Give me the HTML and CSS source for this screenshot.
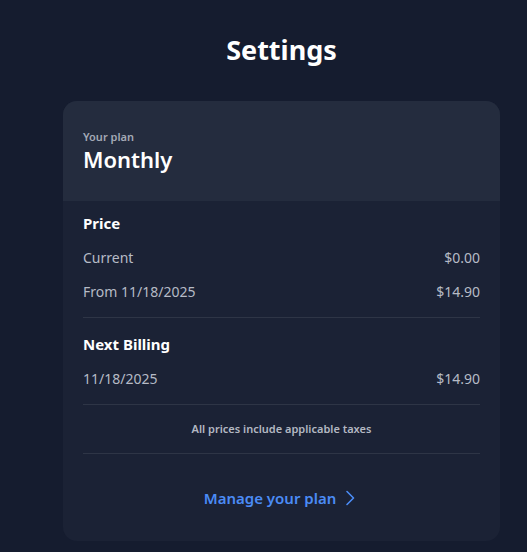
FILE: index.html
```html
<!DOCTYPE html>
<html>
<head>
<meta charset="utf-8">
<link rel="stylesheet" href="styles.css">
</head>
<body>
<div class="page">
  <h1 class="title">Settings</h1>
  <div class="card">
    <div class="card-head">
      <div class="plan-label">Your plan</div>
      <div class="plan-name">Monthly</div>
    </div>
    <div class="card-body">
      <div class="section first">
        <div class="section-title">Price</div>
        <div class="row"><span>Current</span><span>$0.00</span></div>
        <div class="row"><span>From 11/18/2025</span><span>$14.90</span></div>
      </div>
      <div class="section second">
        <div class="section-title">Next Billing</div>
        <div class="row"><span>11/18/2025</span><span>$14.90</span></div>
      </div>
      <div class="taxes">All prices include applicable taxes</div>
      <div class="manage">
        <a class="manage-link" href="#">Manage your plan
          <svg class="chev" width="10" height="16" viewBox="0 0 10 16"><path d="M2 1.5 L8.5 8 L2 14.5" fill="none" stroke="currentColor" stroke-width="1.6" stroke-linecap="round" stroke-linejoin="round"/></svg>
        </a>
      </div>
    </div>
  </div>
</div>
</body>
</html>
```
FILE: styles.css
```css
html, body {
  margin: 0;
  padding: 0;
  background: #151c2f;
  font-family: "Noto Sans", "Open Sans", sans-serif;
}
.page {
  width: 437px;
  margin-left: 63px;
  padding-top: 32px;
  display: flex;
  flex-direction: column;
}
.title {
  margin: 0 0 33px;
  text-align: center;
  color: #ffffff;
  font-size: 27px;
  line-height: 36px;
  font-weight: 700;
}
.card {
  border-radius: 14px;
  overflow: hidden;
  background: #1b2235;
}
.card-head {
  background: #242c3e;
  height: 100px;
  box-sizing: border-box;
  padding: 28px 20px 0;
}
.plan-label {
  color: #a3a9b5;
  font-size: 11px;
  line-height: 15px;
  font-weight: 600;
}
.plan-name {
  color: #ffffff;
  font-size: 22px;
  line-height: 28px;
  font-weight: 600;
  margin-top: 1px;
}
.card-body {
  padding: 0 20px;
}
.section {
  border-bottom: 1px solid #2e3546;
  padding-bottom: 15px;
}
.section.first { padding-top: 12px; }
.section.second { padding-top: 16px; }
.section-title {
  color: #ffffff;
  font-size: 15px;
  line-height: 20px;
  font-weight: 700;
}
.row {
  display: flex;
  justify-content: space-between;
  margin-top: 14px;
  color: #b6bbc6;
  font-size: 14px;
  line-height: 20px;
}
.section-title + .row {
  margin-top: 15px;
}
.taxes {
  text-align: center;
  color: #b3b8c2;
  font-size: 11px;
  line-height: 16px;
  font-weight: 600;
  padding: 16px 0;
  border-bottom: 1px solid #2e3546;
}
.manage {
  display: flex;
  justify-content: center;
  padding: 33px 0 32px;
}
.manage-link {
  display: flex;
  align-items: center;
  gap: 9px;
  color: #4b8cf6;
  text-decoration: none;
  font-size: 15px;
  line-height: 22px;
  font-weight: 600;
}
.chev { display: block; margin-right: 4px; }
```
